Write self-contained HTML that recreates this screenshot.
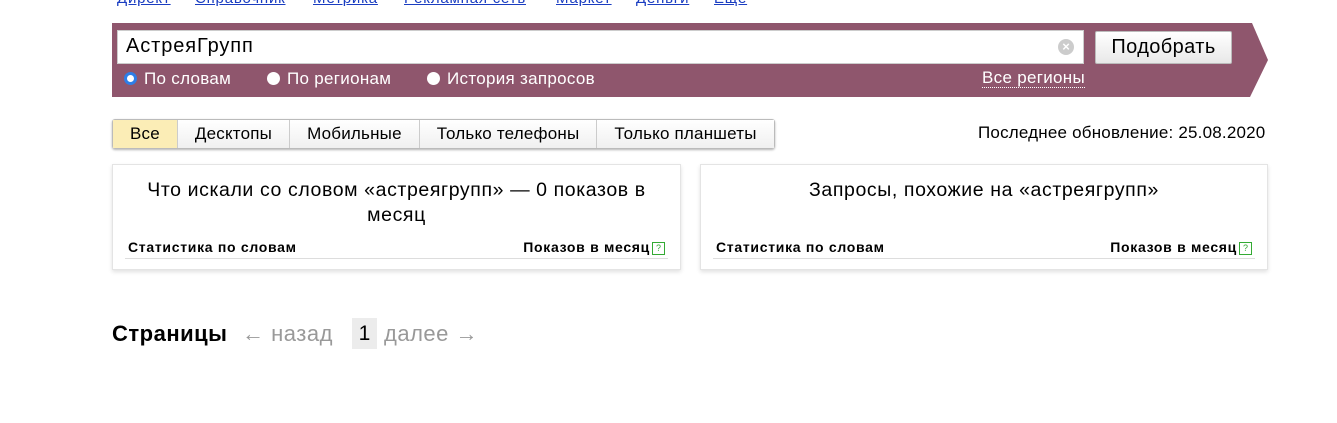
<!DOCTYPE html>
<html><head><meta charset="utf-8"><style>
body{margin:0;width:1337px;height:423px;background:#fff;font-family:"Liberation Sans",Arial,sans-serif;position:relative;overflow:hidden;color:#000}
.a{position:absolute;white-space:nowrap}
.top a{position:absolute;top:-10px;font-size:15px;color:#1a3dc1;text-decoration:underline;letter-spacing:0.8px}
.banner{position:absolute;left:112px;top:23px;width:1156px;height:74px}
.inp{left:117px;top:30px;width:967px;height:34px;background:#fff;box-sizing:border-box;border:1px solid #ccc}
.btn{left:1095px;top:31px;width:137px;height:33px;background:linear-gradient(#fff,#e8e8e8);border:1px solid #bbb;box-sizing:border-box;border-radius:2px;font-size:20px;text-align:center;line-height:31px;letter-spacing:0.4px}
.rad{top:69px;font-size:17px;color:#fff;letter-spacing:0.3px}
.dot{display:inline-block;width:13px;height:13px;border-radius:50%;background:#fff;vertical-align:-1px;margin-right:7px;box-sizing:border-box}
.tabs{left:112px;top:119px;height:28px;display:flex;border:1px solid #bbb;border-radius:3px;box-shadow:0 1px 2px rgba(0,0,0,.3);font-size:17px;letter-spacing:0.2px}
.tabs div{padding:0 17px;line-height:27px;border-left:1px solid #ccc;background:linear-gradient(#fff,#f0f0f0)}
.tabs div:first-child{border-left:0;background:#fbedb6}
.card{top:164px;height:106px;border:1px solid #e4e4e4;box-shadow:0 2px 4px rgba(0,0,0,.12);box-sizing:border-box}
.card h{position:absolute;left:0;right:0;text-align:center;font-size:19.5px;line-height:25px;letter-spacing:0.6px}
.card .l,.card .r{position:absolute;top:74px;font-size:14px;font-weight:bold;letter-spacing:0.7px}
.card .line{position:absolute;left:12px;right:12px;top:93px;border-top:1px solid #ddd}
.q{display:inline-block;width:11px;height:11px;border:1px solid #3a3;color:#3a3;font-size:9px;line-height:11px;text-align:center;margin-left:2px;vertical-align:1px;font-weight:normal;letter-spacing:0}
</style></head><body>
<div class="top">
<a style="left:117px">Директ</a><a style="left:195px">Справочник</a><a style="left:313px">Метрика</a><a style="left:404px">Рекламная сеть</a><a style="left:556px">Маркет</a><a style="left:636px">Деньги</a><a style="left:714px">Ещё</a>
</div>
<svg class="banner" viewBox="0 0 1156 74"><polygon points="0,0 1140,0 1156,37 1138,74 0,74" fill="#8f566d"/></svg>
<div class="a inp"><span class="a" style="left:8px;top:4px;font-size:20px;letter-spacing:0.9px">АстреяГрупп</span>
<span class="a" style="right:9px;top:8px;width:16px;height:16px;border-radius:50%;background:#ccc;color:#fff;font-size:13px;line-height:16px;text-align:center;font-weight:bold">×</span></div>
<div class="a btn">Подобрать</div>
<div class="a rad" style="left:124px"><span class="dot" style="border:3px solid #2d7ee8"></span>По словам</div>
<div class="a rad" style="left:267px"><span class="dot"></span>По регионам</div>
<div class="a rad" style="left:427px"><span class="dot"></span>История запросов</div>
<div class="a rad" style="left:982px;border-bottom:1px dotted #fff;line-height:18px">Все регионы</div>
<div class="a tabs"><div>Все</div><div>Десктопы</div><div>Мобильные</div><div>Только телефоны</div><div>Только планшеты</div></div>
<div class="a" style="left:978px;top:123px;font-size:17px;letter-spacing:0.2px">Последнее обновление: 25.08.2020</div>
<div class="a card" style="left:112px;width:569px"><h style="top:13px">Что искали со словом «астреягрупп» — 0 показов в<br>месяц</h>
<span class="l" style="left:15px">Статистика по словам</span><span class="r" style="right:15px">Показов в месяц<span class="q">?</span></span><div class="line"></div></div>
<div class="a card" style="left:700px;width:568px"><h style="top:13px">Запросы, похожие на «астреягрупп»</h>
<span class="l" style="left:15px">Статистика по словам</span><span class="r" style="right:15px">Показов в месяц<span class="q">?</span></span><div class="line"></div></div>
<div class="a" style="left:112px;top:321px;font-size:22px;font-weight:bold;letter-spacing:0.5px">Страницы</div>
<div class="a" style="left:242px;top:321px;font-size:22px;color:#999;letter-spacing:0.5px">← назад</div>
<div class="a" style="left:352px;top:318px;width:25px;height:31px;background:#ececec;font-size:21px;text-align:center;line-height:31px">1</div>
<div class="a" style="left:384px;top:321px;font-size:22px;color:#999;letter-spacing:0.5px">далее →</div>
</body></html>
